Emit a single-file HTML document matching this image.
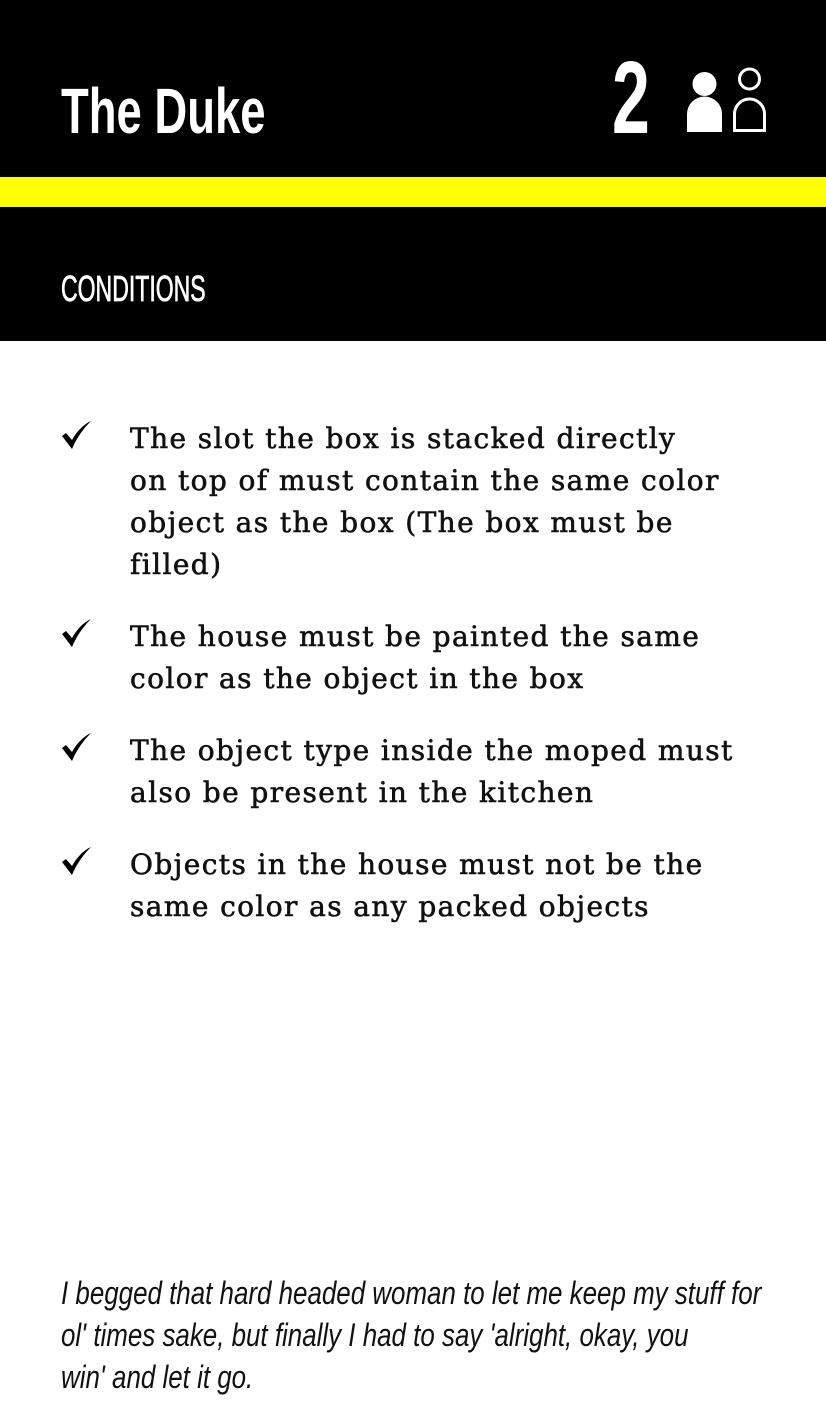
<!DOCTYPE html>
<html><head><style>
body{margin:0;width:826px;height:1417px;position:relative;background:#fff;overflow:hidden;font-family:"Liberation Sans",sans-serif}
.a{position:absolute;white-space:nowrap;transform-origin:0 0}
.li{position:absolute;left:130px;font-family:"DejaVu Serif","Liberation Serif",serif;font-size:28px;letter-spacing:1.4px;line-height:42px;white-space:nowrap;color:#111;-webkit-text-stroke:0.6px #111}
.ck{position:absolute;left:60px}
</style></head><body>
<div style="position:absolute;left:0;top:0;width:826px;height:177px;background:#000"></div>
<div style="position:absolute;left:0;top:177px;width:826px;height:30px;background:#ff0"></div>
<div style="position:absolute;left:0;top:207px;width:826px;height:134px;background:#000"></div>
<div class="a" style="left:61px;top:79px;color:#fff;font-size:64px;line-height:64px;font-weight:bold;transform:scaleX(0.71)">The Duke</div>
<div class="a" style="left:612px;top:46px;color:#fff;font-size:103px;line-height:103px;font-weight:bold;transform:scaleX(0.66)">2</div>
<svg style="position:absolute;left:680px;top:60px" width="100" height="80" viewBox="680 60 100 80">
<circle cx="704.5" cy="84" r="12" fill="#fff"/>
<path d="M687 132V114a17.5 17.5 0 0 1 35 0V132z" fill="#fff"/>
<circle cx="749.5" cy="79" r="10" fill="none" stroke="#fff" stroke-width="3"/>
<path d="M734.5 130.5V114a15 15 0 0 1 30 0V130.5z" fill="none" stroke="#fff" stroke-width="3"/>
</svg>
<div class="a" style="left:61px;top:271px;color:#fff;font-size:36px;line-height:36px;transform:scaleX(0.64);-webkit-text-stroke:0.8px #fff">CONDITIONS</div>

<svg class="ck" style="top:420px" width="32" height="32" viewBox="0 0 32 32"><path d="M2 16l4-3 6 7C17 11 24 4 31 1 24 8 17 17 12 29z" fill="#000"/></svg>
<div class="li" style="top:418px">The slot the box is stacked directly<br>on top of must contain the same color<br>object as the box (The box must be<br>filled)</div>
<svg class="ck" style="top:618px" width="32" height="32" viewBox="0 0 32 32"><path d="M2 16l4-3 6 7C17 11 24 4 31 1 24 8 17 17 12 29z" fill="#000"/></svg>
<div class="li" style="top:616px">The house must be painted the same<br>color as the object in the box</div>
<svg class="ck" style="top:732px" width="32" height="32" viewBox="0 0 32 32"><path d="M2 16l4-3 6 7C17 11 24 4 31 1 24 8 17 17 12 29z" fill="#000"/></svg>
<div class="li" style="top:730px">The object type inside the moped must<br>also be present in the kitchen</div>
<svg class="ck" style="top:846px" width="32" height="32" viewBox="0 0 32 32"><path d="M2 16l4-3 6 7C17 11 24 4 31 1 24 8 17 17 12 29z" fill="#000"/></svg>
<div class="li" style="top:844px">Objects in the house must not be the<br>same color as any packed objects</div>

<div class="a" style="left:61px;top:1272px;font-size:32px;line-height:42px;font-style:italic;color:#111;transform:scaleX(0.81)">I begged that hard headed woman to let me keep my stuff for<br>ol' times sake, but finally I had to say 'alright, okay, you<br>win' and let it go.</div>
</body></html>
